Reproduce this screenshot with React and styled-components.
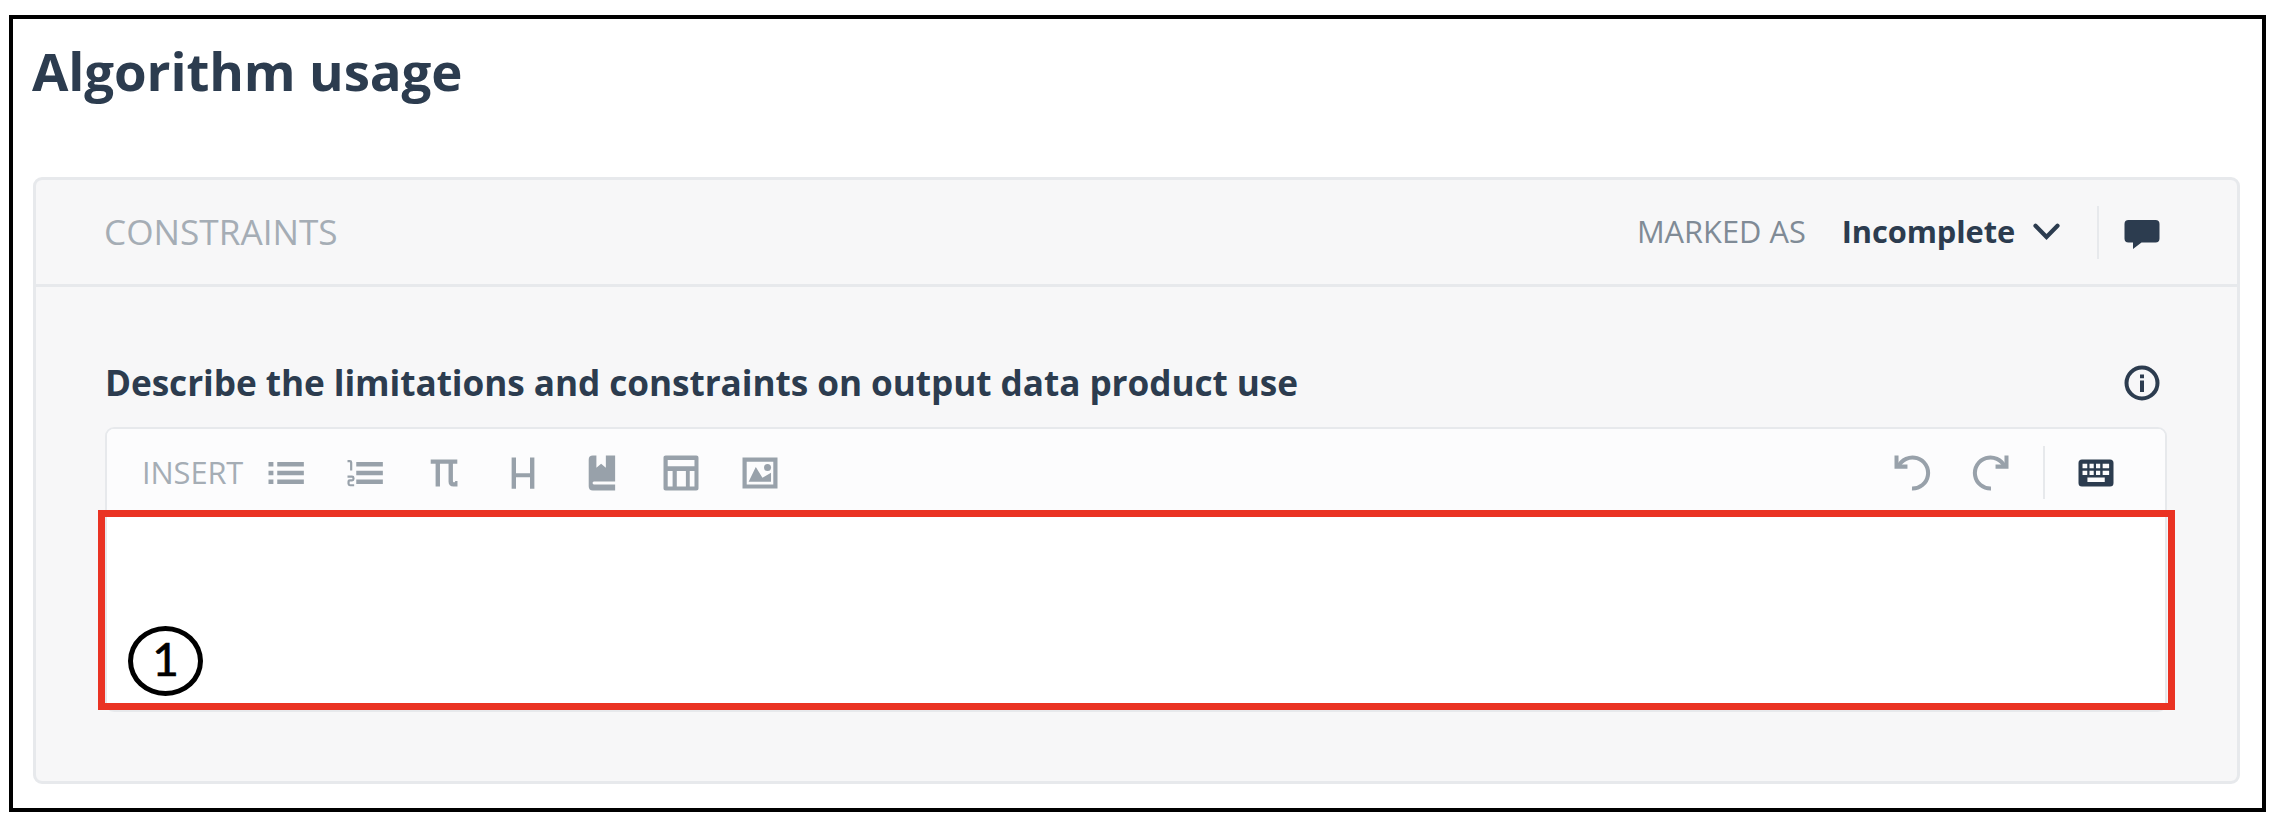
import React from 'react';
import styled, { createGlobalStyle } from 'styled-components';

const Global = createGlobalStyle`
  *, *::before, *::after { box-sizing: border-box; }
  body { margin: 0; background: #fff; font-family: 'Open Sans', 'Liberation Sans', sans-serif; }
`;

const ink = '#2c3c4f';
const muted = '#98a1aa';
const line = '#e7e9ec';

const Page = styled.div`
  height: 832px;
  padding: 15px 16px 20px 9px;
`;

const Frame = styled.main`
  height: 797px;
  border: 4px solid #000;
  padding: 0 22px 0 20px;
`;

const Title = styled.h1`
  margin: 0 0 0 -1px;
  height: 158px;
  padding-top: 16px;
  font-size: 52.8px;
  font-weight: 700;
  line-height: 72px;
  letter-spacing: -0.12px;
  color: ${ink};
  white-space: nowrap;
`;

const Panel = styled.section`
  height: 607px;
  border: 3px solid ${line};
  border-radius: 9px;
  background: #f7f7f8;
`;

const PanelHeader = styled.header`
  display: flex;
  align-items: center;
  justify-content: space-between;
  height: 107px;
  padding: 0 77px 0 68px;
  border-bottom: 3px solid ${line};
`;

const Text = styled.span`
  padding-bottom: ${(p) => p.$lift || 0}px;
  font-size: ${(p) => p.$size}px;
  font-weight: ${(p) => p.$weight || 400};
  line-height: 48px;
  letter-spacing: ${(p) => p.$track || 0}px;
  color: ${(p) => p.$color || ink};
  white-space: nowrap;
`;

const Status = styled.div`
  display: flex;
  align-items: center;
`;

const StatusSelect = styled.div`
  display: flex;
  align-items: center;
  gap: 18px;
  margin-left: 36px;
`;

const Divider = styled.span`
  width: 2px;
  height: 53px;
  margin: ${(p) => p.$margin};
  background: ${line};
`;

const PanelBody = styled.div`
  padding: 75px 70px 0 69px;
`;

const FieldHead = styled.div`
  display: flex;
  align-items: center;
  justify-content: space-between;
  height: 44px;
  padding-right: 7px;
`;

const Editor = styled.div`
  position: relative;
  height: 285px;
  margin-top: 21px;
  border: 2px solid ${line};
  border-radius: 9px;
  background: #fff;
`;

const Toolbar = styled.div`
  display: flex;
  align-items: center;
  justify-content: space-between;
  height: 86px;
  padding: 1px 48px 0 35px;
  border-radius: 7px 7px 0 0;
  background: #fcfcfd;
`;

const Tools = styled.div`
  display: flex;
  align-items: center;
`;

const IconRow = styled.div`
  display: flex;
  align-items: center;
  gap: 37px;
  margin-left: ${(p) => p.$offset || 0}px;
`;

const Icon = styled.svg`
  display: block;
  flex: none;
  width: 42px;
  height: 42px;
  fill: ${(p) => p.$color || muted};
`;

const Glyph = styled.svg`
  display: block;
  flex: none;
  margin-top: ${(p) => p.$drop || 0}px;
`;

const Highlight = styled.div`
  position: absolute;
  left: -9px;
  right: -10px;
  top: 81px;
  height: 200px;
  border: 7px solid #ea3323;
`;

const Marker = styled.div`
  position: absolute;
  left: 23px;
  bottom: 7px;
  display: flex;
  align-items: center;
  justify-content: center;
  width: 75px;
  height: 70px;
  padding-bottom: 5px;
  border: 5px solid #000;
  border-radius: 50%;
  font-family: Lato, sans-serif;
  font-size: 46px;
  line-height: 1;
  -webkit-text-stroke: 0.7px #000;
  color: #000;
`;

const ToolIcon = ({ color, children }) => (
  <Icon viewBox="0 0 24 24" $color={color}>{children}</Icon>
);

const BulletList = () => (
  <ToolIcon>
    <path d="M2 5.700h2.800v2.600H2zM7 5.700h15.200v2.600H7zM2 10.700h2.800v2.600H2zM7 10.700h15.200v2.600H7zM2 15.700h2.800v2.600H2zM7 15.700h15.200v2.600H7z" />
  </ToolIcon>
);

const NumberList = () => (
  <ToolIcon>
    <path d="M7 5.700h15.200v2.600H7zM7 10.700h15.200v2.600H7zM7 15.700h15.200v2.600H7z" />
    <path d="M2 5.200h1.300q.8 0 .8.8v4.500M2 14.100h2.600q.8 0 .8.800v.500q0 .8-.8.8H3.400q-.8 0-.8.8v1.200q0 .8.8.8h2.400" fill="none" stroke={muted} strokeWidth="1.250" />
  </ToolIcon>
);

const Pi = () => (
  <ToolIcon>
    <path d="M4.400 4.300h15.200v2.400h-2.500v9.800c0 .5.2.8.7.8.4 0 .6-.2.6-.7h1.300v3.100h-2.200c-1.900 0-2.900-1-2.900-2.700V6.700H9.700v13H7.200v-13H4.400z" />
  </ToolIcon>
);

const Heading = () => (
  <ToolIcon>
    <path d="M5.500 3.200H8v8.900h8V3.200h2.500V21H16v-6.600H8V21H5.500z" />
  </ToolIcon>
);

const Book = () => (
  <ToolIcon>
    <path d="M6.600 2h2v7l2.700-2.300L14 9V2h5.300v14.800H7.600c-.8 0-1.200.4-1.200.9s.4.900 1.200.900h11.700V22H6.600C5 22 4.200 21.200 4.200 19.600V4.400C4.200 2.800 5 2 6.600 2z" transform="translate(.2 0)" />
  </ToolIcon>
);

const Table = () => (
  <ToolIcon>
    <path fillRule="evenodd" d="M3.300 2h17.400c.8 0 1.300.5 1.300 1.300v17.400c0 .8-.5 1.300-1.300 1.300H3.300c-.8 0-1.300-.5-1.300-1.300V3.300C2 2.500 2.500 2 3.300 2zM4.400 4.500v3.700h15.300V4.500zM4.400 10.800v8.900h2.800v-8.900zM9.600 10.800v8.900h5.200v-8.900zM17 10.800v8.900h2.700v-8.900z" />
  </ToolIcon>
);

const Picture = () => (
  <ToolIcon>
    <path fillRule="evenodd" d="M2 3.200h20v17.600H2zM4.400 5.500v13h15.200v-13z" />
    <path d="M5.500 17l4.100-8.500 3.800 6.200 4.900-2.800V17z" />
    <circle cx="16.300" cy="8.900" r="2" />
  </ToolIcon>
);

const ArrowShape = () => (
  <>
    <path d="M4.200 8.300A8.900 8.900 0 1 1 12 20.900" fill="none" stroke={muted} strokeWidth="2.300" />
    <path d="M2 2v7.500h7.400V7.200H4.300V2z" />
  </>
);

const Undo = () => (
  <ToolIcon>
    <ArrowShape />
  </ToolIcon>
);

const Redo = () => (
  <ToolIcon>
    <g transform="translate(24 0) scale(-1 1)">
      <ArrowShape />
    </g>
  </ToolIcon>
);

const Keyboard = () => (
  <ToolIcon color={ink}>
    <path fillRule="evenodd" d="M4 4.300h16a2 2 0 0 1 2 2v11.400a2 2 0 0 1-2 2H4a2 2 0 0 1-2-2V6.300a2 2 0 0 1 2-2zM4.300 6.700v2.600H7V6.700zM8.300 6.700v2.600h2.400V6.700zM12 6.700v2.600h2.400V6.700zM15.800 6.700v2.600h3.700V6.700zM4.300 10.700v2.500H7v-2.500zM8.300 10.700v2.500h2.400v-2.500zM12 10.700v2.500h2.400v-2.500zM15.800 10.700v2.500h3.700v-2.500zM7.100 14.500v2.700H17v-2.700z" />
  </ToolIcon>
);

const Chevron = () => (
  <Glyph width="27" height="18" viewBox="0 0 27 18">
    <path d="M2.500 2.700L13.500 14 24.500 2.700" fill="none" stroke={ink} strokeWidth="4.200" strokeLinecap="round" />
  </Glyph>
);

const Comment = () => (
  <Glyph $drop={5} width="36" height="29" viewBox="0 0 36 29">
    <path d="M4.500 0h27q4 0 4 4v14.500q0 4-4 4H17.500L9 29v-6.500H4.500q-4 0-4-4V4q0-4 4-4z" fill={ink} />
  </Glyph>
);

const Info = () => (
  <Glyph $drop={-2} width="36" height="36" viewBox="0 0 36 36">
    <circle cx="18" cy="18" r="15.500" fill="none" stroke={ink} strokeWidth="4" />
    <path d="M16 9.500h4v3.700h-4zM16 15.500h4V27h-4z" fill={ink} />
  </Glyph>
);

export default function App() {
  return (
    <Page>
      <Global />
      <Frame>
        <Title>Algorithm usage</Title>
        <Panel>
          <PanelHeader>
            <Text $size={35.2} $lift={2} $color="#a5adb5">CONSTRAINTS</Text>
            <Status>
              <Text $size={30.8} $lift={2} $color="#808b96">MARKED AS</Text>
              <StatusSelect>
                <Text $size={30.8} $lift={2} $weight={700} $track={-0.1}>Incomplete</Text>
                <Chevron />
              </StatusSelect>
              <Divider $margin="0 25px 0 37px" />
              <Comment />
            </Status>
          </PanelHeader>
          <PanelBody>
            <FieldHead>
              <Text $size={35.2} $lift={4} $weight={700} $track={-0.07}>
                Describe the limitations and constraints on output data product use
              </Text>
              <Info />
            </FieldHead>
            <Editor>
              <Toolbar>
                <Tools>
                  <Text $size={30.8} $lift={1} $color="#a5adb5" $track={-0.1}>INSERT</Text>
                  <IconRow $offset={22}>
                    <BulletList />
                    <NumberList />
                    <Pi />
                    <Heading />
                    <Book />
                    <Table />
                    <Picture />
                  </IconRow>
                </Tools>
                <Tools>
                  <IconRow>
                    <Undo />
                    <Redo />
                  </IconRow>
                  <Divider $margin="0 30px 0 31px" />
                  <Keyboard />
                </Tools>
              </Toolbar>
              <Highlight>
                <Marker>1</Marker>
              </Highlight>
            </Editor>
          </PanelBody>
        </Panel>
      </Frame>
    </Page>
  );
}
